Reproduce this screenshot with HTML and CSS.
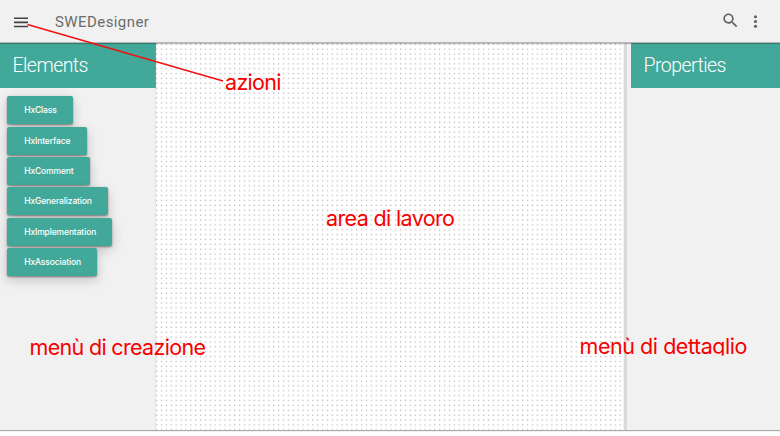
FILE: index.html
```html
<!DOCTYPE html>
<html lang="it">
<head>
<meta charset="utf-8">
<title>SWEDesigner</title>
<link rel="stylesheet" href="styles.css">
</head>
<body>
<header class="topbar">
  <svg class="menu-icon" width="14" height="11" viewBox="0 0 14 11"><path d="M0 1.3h14M0 5.4h14M0 9.5h14" stroke="#424242" stroke-width="1.6"/></svg>
  <h1 class="brand">SWEDesigner</h1>
  <svg class="search-icon" width="19" height="19" viewBox="0 0 24 24"><path fill="#616161" d="M15.5 14h-.79l-.28-.27C15.41 12.59 16 11.11 16 9.5 16 5.91 13.09 3 9.5 3S3 5.91 3 9.5 5.91 16 9.5 16c1.61 0 3.09-.59 4.23-1.57l.27.28v.79l5 4.99L20.49 19l-4.99-5zm-6 0C7.01 14 5 11.99 5 9.5S7.01 5 9.5 5 14 7.01 14 9.5 11.99 14 9.5 14z"/></svg>
  <svg class="more-icon" width="19" height="19" viewBox="0 0 24 24"><g fill="#616161"><circle cx="12" cy="6" r="2"/><circle cx="12" cy="12" r="2"/><circle cx="12" cy="18" r="2"/></g></svg>
</header>
<main class="workspace">
  <aside class="panel elements">
    <h2 class="panel-title">Elements</h2>
    <div class="buttons">
      <button class="btn w-class">HxClass</button>
      <button class="btn w-interface">HxInterface</button>
      <button class="btn w-comment">HxComment</button>
      <button class="btn w-generalization">HxGeneralization</button>
      <button class="btn w-implementation">HxImplementation</button>
      <button class="btn w-association">HxAssociation</button>
    </div>
  </aside>
  <section class="canvas">
    <svg width="100%" height="100%">
      <defs><pattern id="dots" width="4.88" height="4.88" patternUnits="userSpaceOnUse"><rect x="0.1" y="0.7" width="1.1" height="1.1" fill="#a0a0a0"/></pattern></defs>
      <rect width="100%" height="100%" fill="url(#dots)"/>
    </svg>
  </section>
  <aside class="panel properties">
    <h2 class="panel-title">Properties</h2>
  </aside>
</main>
<svg class="notes" width="780" height="436" viewBox="0 0 780 436">
  <defs><clipPath id="detail-clip"><rect x="570" y="330" width="200" height="25.5"/></clipPath></defs>
  <path d="M27.5 24.5L223 81" stroke="#f01010" stroke-width="1.35"/>
  <text x="225" y="89.5" textLength="56.5">azioni</text>
  <text x="326" y="226" textLength="129">area di lavoro</text>
  <text x="29.5" y="355" textLength="176.5">menù di creazione</text>
  <g clip-path="url(#detail-clip)"><text x="579.5" y="354" textLength="168">menù di dettaglio</text></g>
</svg>
</body>
</html>
```
FILE: styles.css
```css
* { box-sizing: border-box; }
body {
  margin: 0;
  width: 780px;
  height: 436px;
  overflow: hidden;
  display: flex;
  flex-direction: column;
  background: #fff;
  font-family: Roboto, "Liberation Sans", sans-serif;
}
.topbar {
  position: relative;
  z-index: 1;
  height: 43px;
  flex: none;
  display: flex;
  align-items: center;
  padding: 0 15px 0 14px;
  background: #f1f1f1;
  border-bottom: 1px solid #b5b5b5;
  box-shadow: 0 1px 1px rgba(0, 0, 0, .25);
}
.menu-icon { margin-top: 2px; }
.brand {
  margin: 1px auto 0 27px;
  font-size: 15px;
  font-weight: 400;
  letter-spacing: .42px;
  color: #6c6c6c;
}
.search-icon { margin: -2px 6px 0 0; }
.workspace { display: flex; height: 387px; flex: none; }
.panel {
  background: #f1f1f1;
  box-shadow: 0 1px 1px #aaa;
}
.elements { width: 156px; box-shadow: 0 1px 1px #aaa, 1px 0 1px #ddd; }
.properties { flex: 1; padding-left: 4px; border-left: 3px solid #dadada; }
.panel-title {
  margin: 0;
  height: 45.4px;
  padding-left: 12.5px;
  background: #42a99a;
  color: #fff;
  font-size: 19.5px;
  font-weight: 300;
  letter-spacing: -.55px;
  line-height: 46px;
}
.buttons {
  display: flex;
  flex-direction: column;
  align-items: flex-start;
  gap: 2.4px;
  padding: 7.8px 7.4px;
}
.btn {
  height: 28px;
  padding: 0 0 0 16.8px;
  border: 0;
  border-radius: 2px;
  background: #42a99a;
  color: #fff;
  font: 500 8.5px Inter, Roboto, sans-serif;
  letter-spacing: -.13px;
  text-align: left;
  box-shadow: 0 1px 2px rgba(0, 0, 0, .4), 0 4px 12px rgba(0, 0, 0, .2);
}
.w-class { width: 65.4px; }
.w-interface { width: 79.4px; }
.w-comment { width: 82.4px; }
.w-generalization { width: 100.5px; }
.w-implementation { width: 105px; }
.w-association { width: 89.6px; }
.canvas {
  width: 468px;
  background: #fff;
  box-shadow: 0 1px 1px #aaa;
}
.canvas svg { display: block; }
.notes {
  position: absolute;
  z-index: 2;
  top: 0;
  left: 0;
  pointer-events: none;
}
.notes text {
  font: 400 21.5px Inter, Roboto, sans-serif;
  fill: #f70000;
}
```
